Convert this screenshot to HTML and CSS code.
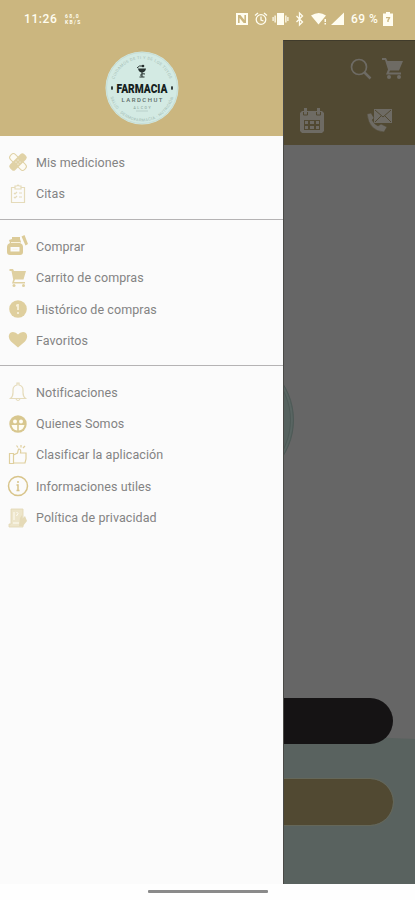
FILE: index.html
```html
<!DOCTYPE html>
<html lang="es">
<head>
<meta charset="utf-8">
<meta name="viewport" content="width=device-width, initial-scale=1">
<title>Farmacia</title>
<link rel="stylesheet" href="styles.css">
</head>
<body>
<div class="phone">
  <header class="status">
    <span class="clock">11:26</span>
    <span class="rate"><span>68,0</span><span>KB/S</span></span>
    <span class="grow"></span>
    <svg class="signals" width="116" height="16" viewBox="0 0 116 16" fill="#fffdf0">
      <path fill-rule="evenodd" d="M1 2h12v12H1zM3 4v8h1.600V7l4 5H11V4H9.400v5l-4-5z"/>
      <g fill="none" stroke="#fffdf0" stroke-width="1.300"><circle cx="26" cy="8.500" r="4.800"/><path d="M20 4.500l3-2.500M32 4.500L29 2M26 5.500v3.500l2.500 1"/></g>
      <path d="M42 2h7v12h-7zM39.500 4.500h1.300v7h-1.300zM50.200 4.500h1.300v7h-1.300zM37.500 6h1.200v4h-1.200zM52.300 6h1.200v4h-1.200z"/>
      <path fill="none" stroke="#fffdf0" stroke-width="1.300" d="M61.500 5l6 6-3 3V2l3 3-6 6"/>
      <path d="M76 4.500q8-5 15 0L83.500 13.500zM89.500 8h1.500v3h-1.500zM89.500 12h1.500v1.500h-1.500zM109 1.500V14H96z"/>
    </svg>
    <span class="percent">69 %</span>
    <svg width="10" height="14" viewBox="0 0 10 14"><path fill="#fffdf0" fill-rule="evenodd" d="M3 0h4v1.500h3V14H0V1.500h3zM3 5v1.200h2.600L4.300 8v2h1.400V8.500L7.200 6V5z"/></svg>
  </header>

  <main class="screen">
    <nav class="drawer">
      <div class="brand">
        <svg width="74" height="74" viewBox="0 0 74 74">
          <circle cx="37" cy="37" r="36.500" fill="#d3eae3"/>
          <circle cx="37" cy="37" r="35.500" fill="none" stroke="#b9d0c8" stroke-width=".5"/>
          <path id="top" fill="none" d="M8 37a29 29 0 0 1 58 0"/>
          <path id="bottom" fill="none" d="M4.500 38a32.500 32.500 0 0 0 65 0"/>
          <g class="ring"><text><textPath href="#top" startOffset="50%">CUIDAMOS DE TI Y DE LOS TUYOS</textPath></text><text><textPath href="#bottom" startOffset="50%">SALUD · DERMOFARMACIA · NUTRICIÓN</textPath></text></g>
          <g fill="#26312f"><path d="M33 17.500h8q-.5 3.500-3.500 4v4h2v1h-5v-1h2v-4q-3-.5-3.500-4z"/><circle cx="38" cy="15" r="1.300"/><ellipse cx="7" cy="37" rx="1" ry="2"/><ellipse cx="67" cy="37" rx="1" ry="2"/></g>
          <path d="M32 17q2-3 6-2M40 23q-5-1-4 2" fill="none" stroke="#26312f"/>
          <text class="brand-name" x="37" y="41.500" textLength="51" lengthAdjust="spacingAndGlyphs">FARMACIA</text>
          <text class="brand-sub" x="37" y="51.300" textLength="41">LARDCHUT</text>
          <text class="brand-place" x="37" y="57.500" textLength="17">ALCOY</text>
          <path d="M31 60h12" stroke="#b0c6be" stroke-width=".7"/>
        </svg>
      </div>

      <ul class="group">
        <li><svg class="icon" viewBox="0 0 20 20"><g transform="rotate(45 10 10)" fill="#e0d2a6"><rect x="0" y="6.500" width="20" height="7" rx="3" fill="#fdfbf4" stroke="#e0d2a6"/><rect x="6.200" y="0" width="7.600" height="20" rx="2.500"/></g><g fill="#fff"><circle cx="10" cy="8" r=".6"/><circle cx="10" cy="12" r=".6"/><circle cx="8" cy="10" r=".6"/><circle cx="12" cy="10" r=".6"/></g></svg>Mis mediciones</li>
        <li><svg class="icon line" viewBox="0 0 20 20"><path d="M7 3.500H3.500v15h13v-15H13M7 2h2l1-1 1 1h2v3H7zM6 9l1 1 2-2M11 9h3M6 13l1 1 2-2M11 13h3"/></svg>Citas</li>
      </ul>
      <ul class="group">
        <li><svg class="icon" viewBox="0 0 20 20"><path fill="#dccb98" fill-rule="evenodd" d="M4 3V1h8v2l1 3-1 1q3 1 3 4v5q0 3-3 3H2q-3 0-3-3v-5q0-3 3-4L1 4zM2.500 11v4.500h9V11zM13.500.5l3-1.500L20 8l-2.500 1.500z"/><path fill="none" stroke="#f8f2dd" d="M3 6.500h9M4.500 13.200h5"/></svg>Comprar</li>
        <li><svg class="icon" viewBox="0 0 20 20"><path fill="#dfd0a1" d="M1.500 1h3.500l1 2h12l-2.500 8.500H7L6 14h11v1.500H4l1.200-4L3.500 3h-2z"/><circle fill="#dfd0a1" cx="6" cy="17.500" r="1.500"/><circle fill="#dfd0a1" cx="15.500" cy="17.500" r="1.500"/></svg>Carrito de compras</li>
        <li><svg class="icon" viewBox="0 0 20 20"><circle cx="10" cy="10" r="8.800" fill="#dfcf9e"/><path d="M10 5v6M10 13v2M8 6.500h2" stroke="#f8f0d8" stroke-width="1.800"/></svg>Histórico de compras</li>
        <li><svg class="icon" viewBox="0 0 20 20"><path fill="#dfcf9e" d="M10 17.500L3 11.500C-1 7 1 2 5 2q3 0 5 2.500Q12 2 15 2c4 0 6 5 2 9.500z"/></svg>Favoritos</li>
      </ul>
      <ul class="group">
        <li><svg class="icon line" viewBox="0 0 20 20"><path d="M2.500 16.500q2.500-2 2.500-6V8q0-4 4-5V1h2v2q4 1 4 5v2.500q0 4 2.500 6zM8 17q2 3 4 0"/></svg>Notificaciones</li>
        <li><svg class="icon" viewBox="0 0 20 20"><circle cx="10" cy="10" r="8.700" fill="#d8c78f"/><g fill="#fffdf3"><circle cx="7" cy="7.500" r="2"/><circle cx="13" cy="7.500" r="2"/><path d="M3.500 11h5.700v5.500q-4.500-.5-5.700-5.500zM10.800 11h5.700q-1.200 5-5.700 5.500z"/></g></svg>Quienes Somos</li>
        <li><svg class="icon line gold" viewBox="0 0 20 20"><path d="M1.500 8.500h4v10h-4zM5.500 10l4-2 1-4q3 0 2 4h5.500v6l-1 4H5.500M8.500.5l1.500 2M13 0v2.500M17 1l-2 2"/></svg>Clasificar la aplicación</li>
        <li><svg class="icon" viewBox="0 0 20 20"><circle cx="10" cy="10" r="9.500" fill="none" stroke="#d8c48a" stroke-width="1.500"/><path d="M10 5v2M8.500 9H10v5M8.500 14.500h3" fill="none" stroke="#d8c48a" stroke-width="1.500"/></svg>Informaciones utiles</li>
        <li><svg class="icon" viewBox="0 0 20 20"><path fill="#ede5ca" stroke="#e2d7b2" stroke-width=".8" d="M3 1h12v18H1v-3h2z"/><path fill="none" stroke="#fffdf5" d="M6 4v8M8.500 4q3 1 0 4M5 15h6"/><path fill="#e5dab7" d="M12 10l2-3v4l3-3 2 5-4 5h-4z"/></svg>Política de privacidad</li>
      </ul>
    </nav>

    <section class="behind">
      <div class="toolbar">
        <div class="tools">
          <svg width="22" height="22" viewBox="0 0 22 22" fill="none" stroke="#6e6b64"><circle cx="9" cy="9" r="7.500" stroke-width="1.700"/><path d="M14 14l6.500 6.500" stroke-width="2.500"/></svg>
          <svg width="21" height="22" viewBox="0 0 21 22" fill="#6e6b64"><path d="M0 0h4l1.500 3H21l-4 9.500H8l-1 2h12v2H4l2-5L3 2H0z"/><circle cx="7" cy="19" r="2"/><circle cx="17" cy="19" r="2"/></svg>
        </div>
        <div class="tabs">
          <svg width="24" height="25" viewBox="0 0 24 25"><path fill="#6e6b64" fill-rule="evenodd" d="M2 3h2V0h3v3h10V0h3v3h2l2 2v18l-2 2H2l-2-2V5zM4 12v10h16V12z"/><path fill="none" stroke="#514932" d="M3.500 4v3h4V4M16.500 4v3h4V4"/><path fill="#6e6b64" d="M5 13h3v3H5zM10 13h4v3h-4zM16 13h3v3h-3zM5 18h3v3H5zM10 18h4v3h-4zM16 18h3v3h-3z"/></svg>
          <svg width="26" height="25" viewBox="0 0 26 25"><path fill="#6e6b64" d="M7 1h18v14H7z"/><path fill="none" stroke="#514932" d="M8 2l8 7 8-7M8 14l6-6M24 14l-6-6"/><path fill="#6e6b64" stroke="#514932" stroke-width=".5" d="M0 6l4-1 3 5-2 2q2 4 6 6l3-2 6 3-3 5Q2 23 0 6z"/></svg>
        </div>
      </div>
      <div class="content">
        <div class="watermark"></div>
        <svg class="wave" viewBox="0 0 132 147" preserveAspectRatio="none"><path fill="#59625f" d="M0 8Q75 1 90 2t42 2v143H0z"/></svg>
        <div class="actions"><div class="pill dark"></div><div class="pill gold-pill"></div></div>
      </div>
    </section>
  </main>
  <footer class="gesture"><span></span></footer>
</div>
</body>
</html>
```
FILE: styles.css
```css
* { box-sizing: border-box; }
body { margin: 0; background: #fefefe; font-family: Roboto, sans-serif; }
.phone { width: 415px; height: 900px; display: flex; flex-direction: column; overflow: hidden; }
.status { height: 40px; flex: none; background: #cbb67f; display: flex; align-items: center; padding: 0 22px 2px 24px; color: #fffdf0; }
.clock { font-size: 12px; font-weight: 500; letter-spacing: .6px; width: 41px; }
.rate { display: flex; flex-direction: column; font-size: 5px; line-height: 6px; font-weight: 700; letter-spacing: 1.300px; }
.grow { flex: 1; }
.percent { font-size: 12px; font-weight: 500; letter-spacing: .5px; width: 32px; white-space: nowrap; }
.status > svg { flex: none; }
.screen { height: 844px; flex: none; display: flex; }
.drawer { width: 283px; flex: none; background: #fbfbfb; }
.brand { height: 96px; background: #cbb67f; display: flex; justify-content: center; padding-top: 11px; }
.brand text { text-anchor: middle; }
.ring { font-size: 4px; fill: #a5bdb5; letter-spacing: .4px; }
.brand-name { font: 900 13px Roboto, sans-serif; fill: #161f1e; }
.brand-sub { font-size: 6px; font-weight: 500; fill: #5b6b67; }
.brand-place { font-size: 3.500px; fill: #819991; }
.group { list-style: none; margin: 0; padding: 10.500px 0 9.700px 8px; }
.group + .group { border-top: 1px solid #b5b3b4; padding: 10.600px 0 8.800px 8px; }
.group li { height: 31.400px; display: flex; align-items: center; gap: 8px; color: #838383; font-size: 12.500px; letter-spacing: .08px; white-space: nowrap; }
.icon { width: 20px; height: 20px; overflow: visible; flex: none; }
.line { fill: none; stroke: #e5dbba; stroke-width: 1.200; }
.gold { stroke: #dfcf9e; }
.behind { flex: 1; display: flex; flex-direction: column; background: #666; border-left: 1px solid #4a4a47; border-top: 1px solid #403b2b; }
.toolbar { height: 104px; flex: none; background: #514932; }
.tools { display: flex; justify-content: flex-end; gap: 10px; padding: 17px 12px 0 0; }
.tabs { display: flex; justify-content: space-between; padding: 28px 22px 0 16px; }
.content { flex: 1; position: relative; overflow: hidden; }
.watermark { position: absolute; right: 121px; top: 207px; width: 136px; height: 136px; border-radius: 50%; background: #56625f; border: 1px solid #4e5a57; box-shadow: inset 0 0 0 2px #596562, inset 0 0 0 3px #4e5a57; }
.wave { position: absolute; bottom: 0; left: 0; width: 100%; height: 149px; }
.actions { position: absolute; left: 0; right: 22px; top: 553px; display: flex; flex-direction: column; gap: 35px; }
.pill { height: 46px; border-radius: 0 23px 23px 0; }
.dark { background: #151314; }
.gold-pill { background: #514932; outline: 1px solid #656759; }
.gesture { height: 16px; display: flex; justify-content: center; padding-top: 6px; }
.gesture span { width: 120px; height: 3px; background: #8a8a8a; border-radius: 1px; }
```
